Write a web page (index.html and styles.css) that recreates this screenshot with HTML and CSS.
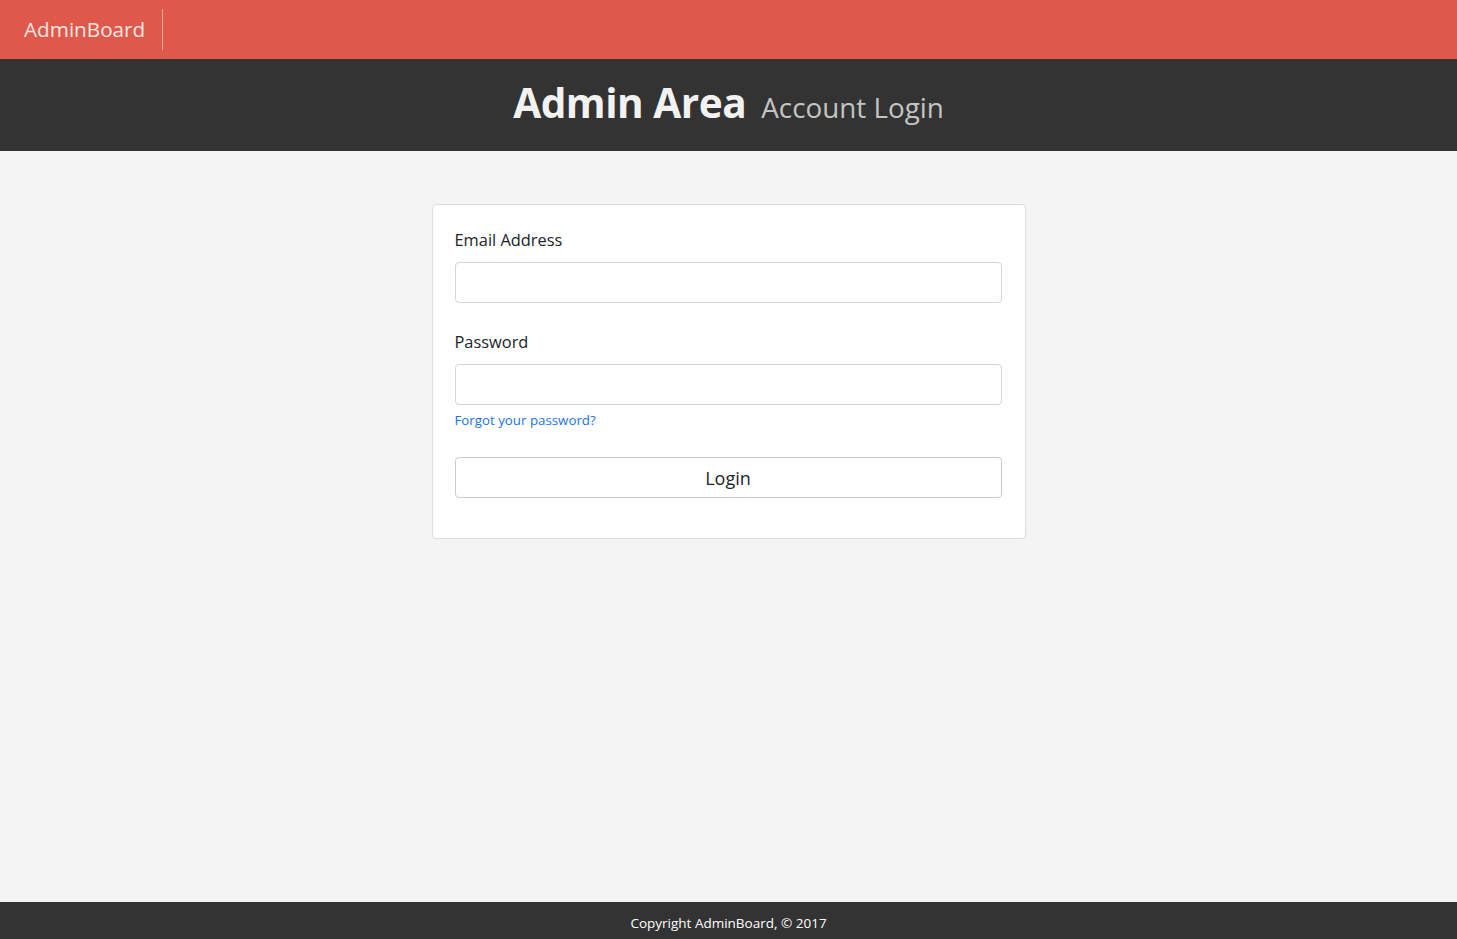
FILE: index.html
```html
<!DOCTYPE html>
<html lang="en">
<head>
<meta charset="utf-8">
<title>AdminBoard | Account Login</title>
<link rel="stylesheet" href="styles.css">
</head>
<body>
<div class="page">
  <nav class="navbar">
    <a class="brand" href="#">AdminBoard</a>
  </nav>
  <header class="header">
    <h1 class="title">Admin Area <small class="subtitle">Account Login</small></h1>
  </header>
  <main class="main">
    <form class="card">
      <div class="group">
        <label class="label">Email Address</label>
        <input class="input" type="text">
      </div>
      <div class="group group-pw">
        <label class="label">Password</label>
        <input class="input" type="password">
        <a class="forgot" href="#">Forgot your password?</a>
      </div>
      <button class="btn" type="button">Login</button>
    </form>
  </main>
  <footer class="footer">Copyright AdminBoard, &copy; 2017</footer>
</div>
</body>
</html>
```

FILE: styles.css
```css
* { box-sizing: border-box; }
html, body { margin: 0; padding: 0; }
body {
  font-family: "Open Sans", "Noto Sans", sans-serif;
  background: #f4f4f4;
  color: #212529;
}
.page {
  min-height: 939px;
  display: flex;
  flex-direction: column;
}
.navbar {
  height: 59px;
  background: #df594b;
  display: flex;
  align-items: center;
  padding-left: 24px;
}
.brand {
  color: #fce6e3;
  text-decoration: none;
  font-size: 20.7px;
  line-height: 41px;
  padding-right: 17px;
  border-right: 1px solid #eda49c;
}
.header {
  height: 92px;
  background: #333333;
  display: flex;
  justify-content: center;
  align-items: flex-start;
}
.title {
  margin: 0;
  padding-top: 14px;
  font-size: 40.6px;
  font-weight: 700;
  color: #f2f2f2;
  line-height: 60px;
  letter-spacing: -0.5px;
}
.subtitle {
  font-size: 27.8px;
  font-weight: 400;
  color: #c4c4c4;
  letter-spacing: 0;
  margin-left: 5px;
}
.main {
  flex: 1;
  padding-top: 53px;
  display: flex;
  justify-content: center;
  align-items: flex-start;
}
.card {
  width: 594px;
  background: #fff;
  border: 1px solid #dddddd;
  border-radius: 4px;
  padding: 22px 23px 40px 22px;
  display: flex;
  flex-direction: column;
}
.group {
  display: flex;
  flex-direction: column;
}
.group-pw { margin-top: 26px; }
.label {
  font-size: 16.4px;
  line-height: 26px;
  margin-bottom: 9px;
  color: #212529;
}
.input {
  height: 41px;
  border: 1px solid #d4d4d4;
  border-radius: 4px;
  background: #fff;
  font-size: 16px;
  padding: 6px 12px;
}
.forgot {
  font-size: 13.3px;
  line-height: 20px;
  margin-top: 5px;
  color: #1a73e8;
  text-decoration: none;
  align-self: flex-start;
}
.btn {
  margin-top: 27px;
  height: 41px;
  border: 1px solid #cccccc;
  border-radius: 4px;
  background: #fff;
  font-family: inherit;
  font-size: 18px;
  color: #212529;
  cursor: pointer;
}
.footer {
  height: 37px;
  background: #333333;
  color: #ffffff;
  font-size: 13.5px;
  display: flex;
  align-items: center;
  justify-content: center;
  padding-top: 4px;
}
```
